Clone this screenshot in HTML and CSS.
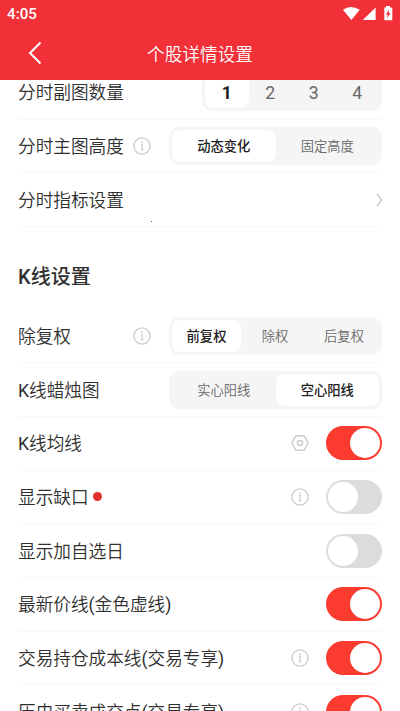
FILE: index.html
```html
<!DOCTYPE html>
<html lang="zh-CN">
<head>
<meta charset="utf-8">
<title>个股详情设置</title>
<link rel="stylesheet" href="styles.css">
</head>
<body>
<svg class="defs" width="0" height="0" aria-hidden="true">
  <symbol id="info" viewBox="0 0 18 18"><circle cx="9" cy="9" r="8.1" fill="none" stroke="#cdcdcd" stroke-width="1.4"/><circle cx="9" cy="5.4" r=".9" fill="#cdcdcd"/><path d="M7.9 7.7H9.1V12.8M7.9 12.9H10.3" fill="none" stroke="#cdcdcd" stroke-width="1.2"/></symbol>
  <symbol id="gear" viewBox="0 0 18 18"><path d="M5.6 1.7H12.4Q13.1 1.7 13.5 2.3L16.9 8.3Q17.2 9 16.9 9.7L13.5 15.7Q13.1 16.3 12.4 16.3H5.6Q4.9 16.3 4.5 15.7L1.1 9.7Q.8 9 1.1 8.3L4.5 2.3Q4.9 1.7 5.6 1.7Z" fill="none" stroke="#cdcdcd" stroke-width="1.4"/><circle cx="9" cy="9" r="2.5" fill="none" stroke="#cdcdcd" stroke-width="1.6"/></symbol>
</svg>
<div class="screen">
  <header class="header">
    <div class="status">
      <span class="clock">4:05</span>
      <svg class="signals" width="52" height="16" viewBox="0 0 52 16" fill="#fff"><path d="M1 3.8Q8.7-1.8 17.8 3.8L9.4 14Z"/><path d="M33.6 1.5V14H20.8Z"/><path fill-rule="evenodd" d="M44 1.5V0H48V1.5H50.3V14.2H42.3V1.5ZM47.2 3.6L43.8 8.5H45.7L45.1 12.3L48.6 7.1H46.6Z"/></svg>
    </div>
    <div class="nav">
      <svg class="back" width="14" height="24" viewBox="0 0 14 24"><path d="M12.5 1.5L2 12L12.5 22.5" fill="none" stroke="#fff" stroke-width="2"/></svg>
      <h1 class="title">个股详情设置</h1>
    </div>
  </header>
  <main class="content">
    <section class="group">
      <div class="row"><span class="label">分时副图数量</span>
        <div class="segments digits"><span class="segment active">1</span><span class="segment">2</span><span class="segment">3</span><span class="segment">4</span></div></div>
      <div class="row"><span class="label">分时主图高度</span><svg class="hint"><use href="#info"/></svg>
        <div class="segments"><span class="segment active">动态变化</span><span class="segment">固定高度</span></div></div>
      <div class="row"><span class="label">分时指标设置</span>
        <svg class="chevron" width="7" height="14" viewBox="0 0 7 14"><path d="M1 1L5.5 7L1 13" fill="none" stroke="#c9c9c9" stroke-width="1.3"/></svg><i class="speck"></i></div>
    </section>
    <h2 class="heading">K线设置</h2>
    <section class="group">
      <div class="row"><span class="label">除复权</span><svg class="hint"><use href="#info"/></svg>
        <div class="segments three"><span class="segment active">前复权</span><span class="segment">除权</span><span class="segment">后复权</span></div></div>
      <div class="row"><span class="label"><span class="latin">K</span>线蜡烛图</span>
        <div class="segments"><span class="segment">实心阳线</span><span class="segment active">空心阳线</span></div></div>
      <div class="row"><span class="label"><span class="latin">K</span>线均线</span><svg class="hint shifted"><use href="#gear"/></svg><span class="switch on"></span></div>
      <div class="row"><span class="label">显示缺口<i class="new"></i></span><svg class="hint shifted"><use href="#info"/></svg><span class="switch"></span></div>
      <div class="row"><span class="label">显示加自选日</span><span class="switch"></span></div>
      <div class="row"><span class="label">最新价线<span class="latin">(</span>金色虚线<span class="latin">)</span></span><span class="switch on"></span></div>
      <div class="row"><span class="label">交易持仓成本线<span class="latin">(</span>交易专享<span class="latin">)</span></span><svg class="hint shifted"><use href="#info"/></svg><span class="switch on"></span></div>
      <div class="row"><span class="label">历史买卖成交点<span class="latin">(</span>交易专享<span class="latin">)</span></span><svg class="hint shifted"><use href="#info"/></svg><span class="switch on"></span></div>
    </section>
  </main>
</div>
</body>
</html>
```
FILE: styles.css
```css
* { box-sizing: border-box; }
body {
  margin: 0;
  overflow: hidden;
  background: #fff;
  color: #303030;
  font-family: Roboto, "Noto Sans CJK SC", sans-serif;
}
.defs { position: absolute; }
.screen { height: 711px; display: flex; flex-direction: column; overflow: hidden; }
.header { flex: none; height: 80px; background: #f23037; color: #fff; }
.status { height: 27px; padding: 0 6px 0 7px; display: flex; align-items: center; justify-content: space-between; }
.clock { font: 500 15px/27px Roboto, sans-serif; letter-spacing: .1px; padding-top: 1px; }
.nav { height: 53px; display: grid; grid-template-columns: 52px 1fr 52px; align-items: center; }
.back { margin: -2px 0 0 28px; }
.title { margin: 0; padding-top: 2px; text-align: center; font-size: 17.65px; font-weight: 350; line-height: 26px; }
.content { flex: 1; min-height: 0; overflow: hidden; }
.group:first-child { margin-top: -14.1px; }
.group { padding: 0 18px; }
.row { position: relative; height: 53.7px; display: flex; align-items: center; border-bottom: 1px solid #f8f8f8; }
.label { flex: 1; padding-top: 2px; font-size: 17.65px; font-weight: 350; line-height: 26px; white-space: nowrap; display: flex; align-items: center; }
.latin { font-weight: 400; }
.heading { margin: 0; height: 82.6px; padding: 0 18px; font-size: 20px; font-weight: 500; line-height: 101px; }
.hint { flex: none; width: 18px; height: 18px; margin-right: 18px; }
.hint.shifted { margin-right: 17px; }
.segments { width: 213px; height: 38px; padding: 3px; display: grid; grid-template-columns: 1fr 1fr; border-radius: 10px; background: #f5f5f5; }
.segments.three { grid-template-columns: 69fr 68fr 70fr; }
.segments.digits { width: 180px; grid-template-columns: repeat(4, 1fr); }
.segment { display: flex; align-items: center; justify-content: center; padding-top: 2px; border-radius: 8px; font-size: 13.3px; font-weight: 350; color: #686868; white-space: nowrap; line-height: 18px; }
.digits .segment { font-size: 17.65px; font-weight: 400; }
.segment.active { background: #fff; color: #202020; font-weight: 500; }
.digits .segment.active { font-weight: 700; }
.switch { flex: none; width: 56px; height: 34px; padding: 2px; border-radius: 17px; background: #dcdcdc; }
.switch::before { content: ""; display: block; width: 30px; height: 30px; border-radius: 50%; background: #fff; }
.switch.on { background: #fb3b30; }
.switch.on::before { margin-left: auto; }
.new { width: 9px; height: 9px; margin: -2px 0 0 4.5px; border-radius: 50%; background: #e03030; }
.chevron { margin-right: -1px; }
.speck { position: absolute; left: 133px; bottom: 4px; width: 1px; height: 1px; background: #555; }
```
